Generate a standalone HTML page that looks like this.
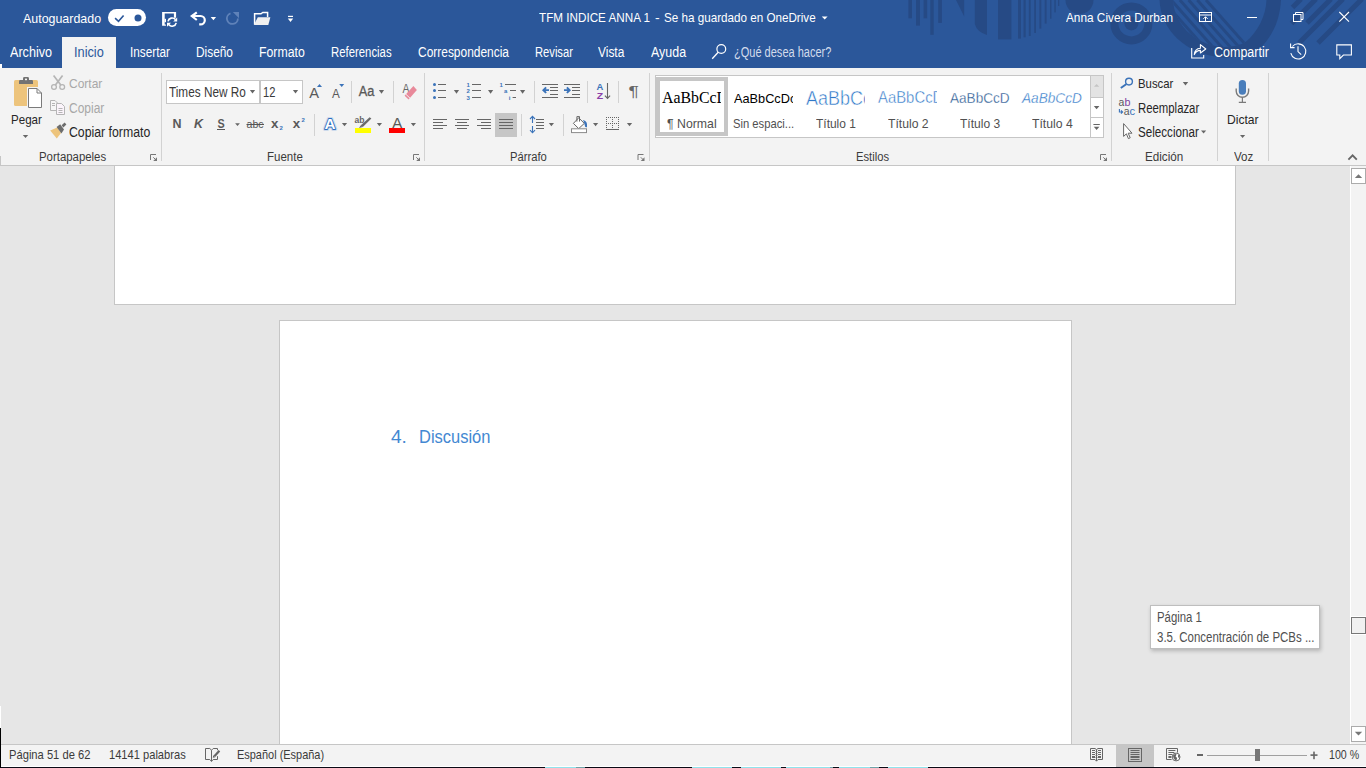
<!DOCTYPE html>
<html lang="es">
<head>
<meta charset="utf-8">
<title>TFM INDICE ANNA 1 - Word</title>
<style>
html,body{margin:0;padding:0;background:#e6e6e6;}
body{width:1366px;height:768px;overflow:hidden;font-family:"Liberation Sans",sans-serif;}
#app{position:relative;width:1366px;height:768px;overflow:hidden;background:#e6e6e6;}
#app div,#app span,#app svg{position:absolute;}
.t{white-space:pre;transform-origin:0 0;}
.clip{overflow:hidden;}
.grp{left:0;top:0;width:0;height:0;}
#titlebar{left:0;top:0;width:1366px;height:68px;background:#2b579a;}
#tabsel{left:62px;top:37px;width:54px;height:31px;background:#f3f3f3;}
#ribbon{left:0;top:68px;width:1366px;height:97px;background:#f3f3f3;}
#ribbonline{left:0;top:165px;width:1366px;height:1px;background:#c6c6c6;}
#page1{left:114px;top:166px;width:1120px;height:138px;background:#fff;border:1px solid #c6c6c6;border-top:none;}
#page2{left:279px;top:320px;width:791px;height:430px;background:#fff;border:1px solid #c6c6c6;}
#vscroll{left:1350px;top:166px;width:16px;height:578px;background:#f3f3f3;border-left:1px solid #fff;box-sizing:border-box;}
#statusline{left:0;top:744px;width:1366px;height:1px;background:#c6c6c6;}
#status{left:0;top:745px;width:1366px;height:21px;background:#f3f3f3;border-bottom:1px solid #fff;}
#bottomline{left:0;top:767px;width:1366px;height:1px;background:#0a0a14;}
.combo{background:#fff;border:1px solid #c6c6c6;box-sizing:border-box;}
.sbbtn{width:15px;height:16px;background:#fff;border:1px solid #ababab;box-sizing:border-box;}
.gsep{width:1px;top:73px;height:88px;background:#d2d2d2;}
.sep{width:1px;background:#d2d2d2;}
</style>
</head>
<body>
<div id="app">
<div id="titlebar"></div>
<div id="tabsel"></div>
<div id="ribbon"></div>
<div id="ribbonline"></div>
<div id="page1"></div>
<div id="page2"></div>
<div id="vscroll"></div>
<div id="statusline"></div>
<div id="status"></div>
<div id="bottomline"></div>
<div id="taskbarpeek" style="left:0;top:0"><div style="left:545px;top:767px;width:31px;height:1px;background:#8fe3ec"></div><div style="left:576px;top:767px;width:9px;height:1px;background:#6fa3a8"></div><div style="left:692px;top:767px;width:40px;height:1px;background:#8fe3ec"></div><div style="left:741px;top:767px;width:40px;height:1px;background:#8fe3ec"></div><div style="left:786px;top:767px;width:44px;height:1px;background:#8fe3ec"></div><div style="left:830px;top:767px;width:3px;height:1px;background:#6fa3a8"></div><div style="left:839px;top:767px;width:31px;height:1px;background:#8fe3ec"></div><div style="left:870px;top:767px;width:9px;height:1px;background:#6fa3a8"></div><div style="left:888px;top:767px;width:40px;height:1px;background:#8fe3ec"></div></div>
<div id="leftedge" style="left:0;top:728px;width:1px;height:40px;background:#000"></div>
<div style="left:0;top:706px;width:1px;height:22px;background:#fff"></div>
<div style="left:0;top:64px;width:2px;height:4px;background:#fff"></div>
<div style="left:0;top:156px;width:1px;height:9px;background:#c6c6c6"></div>
<svg id="titleart" style="left:0;top:0" width="1366" height="68" viewBox="0 0 1366 68">
<defs>
<clipPath id="shieldin"><path d="M1173 0 C1174 22 1192 44 1222 47 Q1238 47 1245.5 42 C1258 32 1266 15 1266.5 0 Z"/></clipPath>
</defs>
<g fill="#264a85">
<rect x="908.4" y="0" width="3.6" height="18.3"/>
<rect x="916" y="0" width="4" height="25.6"/>
<rect x="923.6" y="0" width="3.6" height="18.3"/>
<rect x="930.3" y="0" width="3.4" height="34.8"/>
<rect x="938.2" y="0" width="3.7" height="22.9"/>
<path d="M956 0 L964.2 0 L964.2 16.4 Z"/>
<path d="M974.8 0 H987 V35 Q977 32 974.8 24 Z"/>
<rect x="998" y="0" width="13.4" height="39.4"/>
<rect x="1018" y="0" width="3" height="38.6"/>
<rect x="1023.5" y="0" width="2.2" height="37.3"/>
<rect x="1028.8" y="0" width="1.9" height="36"/>
<rect x="1034.2" y="0" width="1.8" height="33"/>
<rect x="1039.4" y="0" width="1.9" height="28.6"/>
<rect x="1044.7" y="0" width="1.9" height="23.6"/>
<rect x="1050" y="0" width="1.5" height="18.7"/>
<rect x="1054.3" y="0" width="1.5" height="12.4"/>
<rect x="1058" y="0" width="1.3" height="6"/>
<circle cx="1079.5" cy="0" r="14"/>
<circle cx="1131.4" cy="23.4" r="7"/>
<path d="M1159.5 0 C1161 30 1185 54 1222 57.5 Q1245 58 1258 50 C1272 38 1280 20 1281 0 Z"/>
</g>
<circle cx="1131.4" cy="23.4" r="17" fill="none" stroke="#264a85" stroke-width="8"/>
<path d="M1173 0 C1174 22 1192 44 1222 47 Q1238 47 1245.5 42 C1258 32 1266 15 1266.5 0 Z" fill="#2b579a"/>
<g clip-path="url(#shieldin)" stroke="#264a85" stroke-width="2.9" fill="none">
<path d="M1206 0 L1250.3 50"/><path d="M1197.3 0 L1241.6 50"/><path d="M1188.6 0 L1232.9 50"/><path d="M1179.9 0 L1224.2 50"/><path d="M1171.2 0 L1215.5 50"/><path d="M1162.5 0 L1206.8 50"/>
</g>
<g stroke="#264a85" stroke-width="5" fill="none">
<path d="M1299 43 L1343 -1"/><path d="M1318 43 L1362 -1"/><path d="M1307 23 L1331 -1"/><path d="M1291.5 23.5 L1316 -1"/><path d="M1292.5 7.5 L1301 -1"/>
</g>
</svg>
<svg id="titleicons" style="left:0;top:0" width="1366" height="68" viewBox="0 0 1366 68">
<!-- autosave toggle -->
<rect x="108" y="9" width="38" height="17" rx="8.5" fill="#fff"/>
<path d="M115.1 18.1 L118.5 21.3 L123.6 15.4" fill="none" stroke="#2b579a" stroke-width="1.6"/>
<circle cx="138" cy="17.9" r="3.5" fill="#2b579a"/>
<!-- save -->
<path d="M162.1 11.9 H176.1 V17.8 H173.9 V13.5 H164.7 V24.4 H165.9 V25.8 H162.1 Z" fill="#fff"/>
<rect x="164.5" y="18.8" width="1.5" height="3.4" fill="#fff"/>
<path d="M168 21.4 A4.2 4.2 0 0 1 175.4 19.6" fill="none" stroke="#fff" stroke-width="1.6"/>
<path d="M176.2 22.8 A4.2 4.2 0 0 1 168.8 24.6" fill="none" stroke="#fff" stroke-width="1.6"/>
<path d="M177.2 17.4 V21.4 H173.2 Z" fill="#fff"/>
<path d="M167 26.8 V22.8 H171 Z" fill="#fff"/>
<!-- undo -->
<path d="M193 16 H200.6 A4.2 4.2 0 0 1 200.6 24.4 H199.2" fill="none" stroke="#fff" stroke-width="2.2"/>
<path d="M196.8 12.3 L191.8 16 L196.8 20" fill="none" stroke="#fff" stroke-width="2.2" stroke-linejoin="miter"/>
<path d="M210.7 17 H216.1 L213.4 20.2 Z" fill="#fff"/>
<!-- redo (disabled) -->
<path d="M237.9 18.5 A5.5 5.5 0 1 1 230.5 13.3" fill="none" stroke="#5f82b9" stroke-width="1.8"/>
<path d="M232.8 12 H239 V18.2 Z" fill="#5f82b9"/>
<!-- open folder -->
<path d="M254.6 24.5 V13.8 H261 L262.8 12.4 H267.6 V17" fill="none" stroke="#fff" stroke-width="1.5"/>
<path d="M257.8 17.2 H270.4 L268.3 25 H253.9 Z" fill="#f0f0f0"/>
<!-- customize QAT -->
<rect x="288" y="15.8" width="5" height="1.2" fill="#fff"/>
<path d="M287.8 18.6 H293.2 L290.5 22 Z" fill="#fff"/>
<!-- title dropdown arrow -->
<path d="M821.8 16.6 H827.6 L824.7 19.6 Z" fill="#fff"/>
<!-- ribbon display options -->
<rect x="1199.5" y="12.5" width="12" height="9" fill="none" stroke="#fff" stroke-width="1"/>
<path d="M1199.5 15 H1211.5" stroke="#fff" stroke-width="1" fill="none"/>
<path d="M1205.5 21 V17 M1203.3 18.9 L1205.5 16.7 L1207.7 18.9" stroke="#fff" stroke-width="1" fill="none"/>
<!-- minimize -->
<rect x="1247" y="17" width="10" height="1" fill="#fff"/>
<!-- restore -->
<rect x="1293.5" y="14.5" width="7.5" height="7" fill="none" stroke="#fff" stroke-width="1"/>
<path d="M1295.5 14.5 V12.5 H1303 V19.5 H1301" fill="none" stroke="#fff" stroke-width="1"/>
<!-- close -->
<path d="M1339.3 12 L1349 21.7 M1349 12 L1339.3 21.7" stroke="#fff" stroke-width="1.1" fill="none"/>
<!-- search (tell me) -->
<circle cx="721.3" cy="49" r="4.4" fill="none" stroke="#fff" stroke-width="1.2"/>
<path d="M718.2 52.2 L712.2 58.8" stroke="#fff" stroke-width="1.3" fill="none"/>
<!-- share -->
<path d="M1191.7 48 V58 H1203.7 V55" fill="none" stroke="#fff" stroke-width="1.1"/>
<path d="M1194.3 54.6 C1194.6 50.5 1197 48.4 1200.4 48.2 V44.6 L1205.8 49 L1200.4 53 V50.4 C1197.6 50.4 1195.6 51.6 1194.3 54.6 Z" fill="none" stroke="#fff" stroke-width="1.1" stroke-linejoin="round"/>
<!-- history -->
<path d="M1292.4 46.5 A7.6 7.6 0 1 1 1290.8 53.2" fill="none" stroke="#fff" stroke-width="1.1"/>
<path d="M1290.6 43.6 V47.6 H1294.6" fill="none" stroke="#fff" stroke-width="1.1"/>
<path d="M1298 46.2 V51.6 L1301.2 54.6" fill="none" stroke="#fff" stroke-width="1.1"/>
<!-- comments -->
<path d="M1336.8 44.9 H1351.4 V55 H1343.4 L1339.8 58.6 V55 H1336.8 Z" fill="none" stroke="#fff" stroke-width="1.1"/>
</svg>

<div class="gsep" style="left:161px"></div>
<div class="gsep" style="left:424px"></div>
<div class="gsep" style="left:649px"></div>
<div class="gsep" style="left:1111px"></div>
<div class="gsep" style="left:1217px"></div>
<div class="gsep" style="left:1268px"></div>
<div class="sep" style="left:351px;top:81px;height:22px"></div>
<div class="sep" style="left:393px;top:81px;height:22px"></div>
<div class="sep" style="left:314px;top:114px;height:22px"></div>
<div class="sep" style="left:534px;top:81px;height:22px"></div>
<div class="sep" style="left:587px;top:81px;height:22px"></div>
<div class="sep" style="left:618px;top:81px;height:22px"></div>
<div class="sep" style="left:521px;top:114px;height:22px"></div>
<div class="sep" style="left:563px;top:114px;height:22px"></div>
<div id="fontname" class="combo" style="left:166px;top:80px;width:94px;height:24px"></div>
<div id="fontsize" class="combo" style="left:260px;top:80px;width:43px;height:24px"></div>
<div id="justifysel" style="left:495px;top:113px;width:22px;height:24px;background:#c6c6c6"></div>
<div id="gallery" style="left:655px;top:75px;width:449px;height:63px;background:#fff;border:1px solid #c6c6c6;box-sizing:border-box"></div>
<div id="stylesel" style="left:656px;top:77px;width:72px;height:59px;border:4px solid #c6c6c6;box-sizing:border-box;background:#fff"></div>
<div id="galscroll" style="left:1090px;top:76px;width:12px;height:61px;border-left:1px solid #c6c6c6;background:#fff"></div>
<div style="left:1091px;top:76px;width:12px;height:21px;background:#e3e3e3"></div>
<div style="left:1090px;top:97px;width:13px;height:1px;background:#c6c6c6"></div>
<div style="left:1090px;top:117px;width:13px;height:1px;background:#c6c6c6"></div>
<svg id="ribbonicons" style="left:0;top:0" width="1366" height="170" viewBox="0 0 1366 170" font-family="Liberation Sans, sans-serif">
<!-- paste -->
<rect x="14" y="80" width="24" height="26" rx="1.6" fill="#edc47c"/>
<path d="M19 84 V81.2 Q19 80 20.2 80 H23 V78.4 Q23 77 24.4 77 H27.6 Q29 77 29 78.4 V80 H31.8 Q33 80 33 81.2 V84 Z" fill="#737373"/>
<rect x="25" y="78.6" width="2" height="1.6" fill="#f3f3f3"/>
<rect x="27" y="87" width="16" height="22" fill="#f3f3f3"/>
<path d="M28.5 88.5 H37 L41.5 93 V107.5 H28.5 Z" fill="#fff" stroke="#7a7a7a" stroke-width="1"/>
<path d="M37 88.5 V93 H41.5" fill="none" stroke="#7a7a7a" stroke-width="1"/>
<path d="M22.8 135 H28.2 L25.5 138 Z" fill="#666"/>
<!-- cut (disabled) -->
<g stroke="#b5b5b5" fill="none" stroke-width="1.3">
<circle cx="54" cy="87" r="2.4"/><circle cx="62.2" cy="87" r="2.4"/>
<path d="M55.4 85 L62.6 75.6 M60.8 85 L53.6 75.6" stroke-width="1.7"/>
</g>
<!-- copy (disabled) -->
<g stroke="#b5b5b5" fill="#fbf4fb" stroke-width="1">
<path d="M50.5 100.5 H55 L57.5 103 V110.5 H50.5 Z" fill="#f6f6f6"/>
<path d="M56.5 103.5 H61.5 L64.5 106.5 V114.5 H56.5 Z"/>
<path d="M52 103.5 H55 M52 105.5 H55 M58.5 108.5 H62.5 M58.5 110.5 H62.5 M58.5 112.5 H62.5" fill="none"/>
</g>
<!-- format painter -->
<path d="M50.2 130.4 L57.2 127.6 L61 133 L56.8 138.6 Z" fill="#edc47c"/>
<path d="M56.6 127 L60.2 124.2 L64 129.6 L61.4 133.6 Z" fill="#6d6d6d"/>
<path d="M61.6 125.2 L64.6 122.6 L66.4 124.6 L63.4 127.6 Z" fill="#6d6d6d"/>
<!-- dialog launchers -->
<g id="dl">
<path d="M150.5 160 V154.5 H156" fill="none" stroke="#777" stroke-width="1"/><path d="M153.3 157.3 L155.6 159.6" fill="none" stroke="#777" stroke-width="1"/><path d="M157 157.2 V161 H153.2 Z" fill="#777"/>
</g>
<use href="#dl" x="263"/><use href="#dl" x="487.5"/><use href="#dl" x="950"/>
<!-- combo arrows -->
<path d="M249.9 90 H255.1 L252.5 93.6 Z" fill="#666"/>
<path d="M292.9 90 H298.1 L295.5 93.6 Z" fill="#666"/>
<!-- grow / shrink font -->
<text x="309.2" y="97.8" font-size="15" fill="#595959" textLength="9.8" lengthAdjust="spacingAndGlyphs">A</text>
<path d="M317 87 L319.5 84 L322 87 Z" fill="#3b73b9"/>
<text x="332" y="97.8" font-size="12" fill="#595959" textLength="7.8" lengthAdjust="spacingAndGlyphs">A</text>
<path d="M339.2 84 H344.2 L341.7 87 Z" fill="#3b73b9"/>
<!-- change case -->
<text x="358.8" y="95.8" font-size="14" fill="#595959" textLength="15.6" lengthAdjust="spacingAndGlyphs" stroke="#595959" stroke-width="0.3">Aa</text>
<path d="M378.9 90 H384.1 L381.5 93.8 Z" fill="#666"/>
<!-- clear formatting -->
<text x="402.4" y="93.2" font-size="13" fill="#666" textLength="7" lengthAdjust="spacingAndGlyphs">A</text>
<path d="M413.4 86.1 L416.9 90 L408.6 99.5 L404.6 95.8 Z" fill="#e8899a"/>
<path d="M405.8 94.2 L410 98.2" stroke="#f3f3f3" stroke-width="1" fill="none"/>
<!-- B I U -->
<text x="172.4" y="127.9" font-size="12.5" font-weight="bold" fill="#595959" textLength="9" lengthAdjust="spacingAndGlyphs">N</text>
<text x="194" y="127.9" font-size="12.5" font-weight="bold" font-style="italic" fill="#595959" textLength="9" lengthAdjust="spacingAndGlyphs">K</text>
<text x="217.4" y="127.6" font-size="12" font-weight="bold" fill="#595959" textLength="7.2" lengthAdjust="spacingAndGlyphs">S</text>
<rect x="217" y="129" width="8" height="1" fill="#595959"/>
<path d="M235.1 123.3 H239.9 L237.5 126.1 Z" fill="#666"/>
<text x="246.6" y="127.9" font-size="11.5" fill="#555" textLength="17" lengthAdjust="spacingAndGlyphs">abc</text>
<rect x="246.5" y="124" width="17.5" height="1" fill="#555"/>
<text x="271" y="127.9" font-size="13" font-weight="bold" fill="#595959" textLength="7.4" lengthAdjust="spacingAndGlyphs">x</text>
<text x="279.6" y="130.2" font-size="6" font-weight="bold" fill="#3b73b9">2</text>
<text x="292.8" y="127.9" font-size="13" font-weight="bold" fill="#595959" textLength="7.4" lengthAdjust="spacingAndGlyphs">x</text>
<text x="301.4" y="122" font-size="6" font-weight="bold" fill="#3b73b9">2</text>
<!-- text effects -->
<text x="324.4" y="129.2" font-size="15.5" font-weight="bold" fill="#fff" stroke="#a9c3e6" stroke-width="4" stroke-linejoin="round" opacity="0.5" textLength="11" lengthAdjust="spacingAndGlyphs">A</text>
<text x="324.4" y="129.2" font-size="15.5" font-weight="bold" fill="#fff" stroke="#2e6dbd" stroke-width="1.8" stroke-linejoin="round" paint-order="stroke" textLength="11" lengthAdjust="spacingAndGlyphs">A</text>
<path d="M341.9 123 H347.1 L344.5 126.2 Z" fill="#666"/>
<!-- highlight -->
<text x="354.6" y="122.8" font-size="9" font-weight="bold" fill="#666" textLength="10" lengthAdjust="spacingAndGlyphs">ab</text>
<path d="M369.6 117.2 L371.4 118.6 L362.8 127 L360.6 125.6 Z" fill="#6a6a6a"/>
<path d="M360.6 125.6 L362.8 127 L359 128 Z" fill="#6a6a6a"/>
<rect x="355" y="128" width="16" height="5" fill="#ffff00"/>
<path d="M376.8 123 H382 L379.4 126.2 Z" fill="#666"/>
<!-- font color -->
<text x="392.2" y="128" font-size="14.2" fill="#595959" textLength="10" lengthAdjust="spacingAndGlyphs">A</text>
<rect x="389" y="128" width="16" height="5" fill="#ff0000"/>
<path d="M410.8 123 H416 L413.4 126.2 Z" fill="#666"/>
<!-- bullets -->
<g fill="#3b73b9"><circle cx="434.5" cy="84.5" r="1.5"/><circle cx="434.5" cy="90.5" r="1.5"/><circle cx="434.5" cy="97.5" r="1.5"/></g>
<g fill="#666"><rect x="438" y="84" width="8" height="1"/><rect x="438" y="90" width="8" height="1"/><rect x="438" y="97" width="8" height="1"/></g>
<path d="M453.9 90 H459.1 L456.5 93.8 Z" fill="#666"/>
<!-- numbering -->
<g fill="#3b73b9" font-size="6" font-weight="bold"><text x="466.6" y="87">1</text><text x="466.6" y="93">2</text><text x="466.6" y="99.8">3</text></g>
<g fill="#666"><rect x="472" y="84" width="9" height="1"/><rect x="472" y="90" width="9" height="1"/><rect x="472" y="97" width="9" height="1"/></g>
<path d="M488 90 H493.2 L490.6 93.8 Z" fill="#666"/>
<!-- multilevel -->
<g fill="#3b73b9" font-size="6" font-weight="bold"><text x="499.6" y="87">1</text><text x="504" y="93">a</text><text x="508.8" y="99.8">i</text></g>
<g fill="#666"><rect x="505" y="84" width="11" height="1"/><rect x="510" y="90" width="6" height="1"/><rect x="512.6" y="97" width="3.4" height="1"/></g>
<path d="M520 90 H525.2 L522.6 93.8 Z" fill="#666"/>
<!-- decrease indent -->
<g fill="#666"><rect x="542" y="84" width="16" height="1"/><rect x="550" y="87" width="8" height="1"/><rect x="550" y="90" width="8" height="1"/><rect x="550" y="94" width="8" height="1"/><rect x="542" y="97" width="16" height="1"/></g>
<path d="M542 90.2 L545.4 86.8 L546.8 88 L545.6 89.3 H549 V91.1 H545.6 L546.8 92.4 L545.4 93.6 Z" fill="#3b73b9"/>
<!-- increase indent -->
<g fill="#666"><rect x="564" y="84" width="16" height="1"/><rect x="572" y="87" width="8" height="1"/><rect x="572" y="90" width="8" height="1"/><rect x="572" y="94" width="8" height="1"/><rect x="564" y="97" width="16" height="1"/></g>
<path d="M571 90.2 L567.6 86.8 L566.2 88 L567.4 89.3 H564 V91.1 H567.4 L566.2 92.4 L567.6 93.6 Z" fill="#3b73b9"/>
<!-- sort -->
<text x="596.6" y="89.6" font-size="9" font-weight="bold" fill="#3b73b9" textLength="6.8" lengthAdjust="spacingAndGlyphs">A</text>
<text x="596.8" y="98.8" font-size="9.6" font-weight="bold" fill="#8b3fa8" textLength="6.4" lengthAdjust="spacingAndGlyphs">Z</text>
<path d="M607.5 83 V98 M604.9 95.6 L607.5 98.4 L610.1 95.6" fill="none" stroke="#666" stroke-width="1.1"/>
<!-- pilcrow -->
<text x="628.6" y="96" font-size="15.5" fill="#666" textLength="10.4" lengthAdjust="spacingAndGlyphs">¶</text>
<!-- alignment -->
<g fill="#666">
<rect x="433" y="119" width="14" height="1"/><rect x="433" y="122" width="10" height="1"/><rect x="433" y="125" width="14" height="1"/><rect x="433" y="128" width="10" height="1"/>
<rect x="455" y="119" width="14" height="1"/><rect x="457" y="122" width="10" height="1"/><rect x="455" y="125" width="14" height="1"/><rect x="457" y="128" width="10" height="1"/>
<rect x="477" y="119" width="14" height="1"/><rect x="481" y="122" width="10" height="1"/><rect x="477" y="125" width="14" height="1"/><rect x="481" y="128" width="10" height="1"/>
<rect x="499" y="119" width="14" height="1"/><rect x="499" y="122" width="14" height="1"/><rect x="499" y="125" width="14" height="1"/><rect x="499" y="128" width="14" height="1"/>
</g>
<!-- line spacing -->
<g fill="none" stroke="#3b73b9" stroke-width="1.1"><path d="M532.5 116.6 V123 M530 119 L532.5 116.4 L535 119"/><path d="M532.5 126 V132.6 M530 130.2 L532.5 132.8 L535 130.2"/></g>
<g fill="#666"><rect x="536" y="119" width="8" height="1"/><rect x="536" y="122" width="8" height="1"/><rect x="536" y="125" width="8" height="1"/><rect x="536" y="128" width="8" height="1"/></g>
<path d="M548.8 123 H554 L551.4 126.2 Z" fill="#666"/>
<!-- shading -->
<path d="M573.4 123.4 L578.7 117.8 L584.3 123.4 L578.7 128.6 Z" fill="#fff" stroke="#666" stroke-width="1"/>
<path d="M576.9 121.6 V116.6 H579.5 V121.6" fill="none" stroke="#666" stroke-width="1"/>
<path d="M582.8 120 Q588 121 587 127.2 Q584.8 127.6 584.6 124.4 Q584.6 122.4 582.8 120 Z" fill="#3b73b9"/>
<rect x="571.5" y="128.8" width="15" height="3.8" fill="#fff" stroke="#8a8a8a" stroke-width="1"/>
<path d="M593 123 H598.2 L595.6 126.2 Z" fill="#666"/>
<!-- borders -->
<g stroke="#666" stroke-width="1" stroke-dasharray="1 1" fill="none">
<path d="M606 117.5 H619"/><path d="M606 123.5 H619"/><path d="M606.5 117 V129"/><path d="M612.5 117 V129"/><path d="M618.5 117 V129"/>
</g>
<rect x="606" y="129" width="13" height="1" fill="#666"/>
<path d="M626.9 123 H632.1 L629.5 126.2 Z" fill="#666"/>
<!-- gallery scroll -->
<path d="M1094 86.8 L1096.6 84 L1099.2 86.8 Z" fill="#c4c4c4"/>
<path d="M1093.8 106 H1099.4 L1096.6 109.2 Z" fill="#666"/>
<rect x="1093.4" y="124" width="6.4" height="1" fill="#666"/><path d="M1093.8 126.8 H1099.4 L1096.6 130 Z" fill="#666"/>
<!-- find -->
<circle cx="1129" cy="81.6" r="3.4" fill="none" stroke="#3b73b9" stroke-width="1.4"/>
<path d="M1126.2 84.2 L1120.8 88" stroke="#3b73b9" stroke-width="2" fill="none"/>
<path d="M1182.8 82 H1188.2 L1185.5 85.4 Z" fill="#666"/>
<!-- replace -->
<text x="1118.6" y="106.4" font-size="11" fill="#595959" textLength="5.8" lengthAdjust="spacingAndGlyphs">a</text>
<text x="1124.4" y="106.4" font-size="11" fill="#7c3f9e" textLength="6" lengthAdjust="spacingAndGlyphs">b</text>
<text x="1123.8" y="114.8" font-size="11" fill="#595959" textLength="5.8" lengthAdjust="spacingAndGlyphs">a</text>
<text x="1129.6" y="114.8" font-size="11" fill="#3b73b9" textLength="5.6" lengthAdjust="spacingAndGlyphs">c</text>
<path d="M1119.4 109 V112 H1122.4 M1121 110.4 L1122.6 112 L1121 113.6" fill="none" stroke="#3b73b9" stroke-width="1.1"/>
<!-- select -->
<path d="M1123.6 123.6 V136.4 L1126.4 133.8 L1128.4 138.6 L1130.2 137.8 L1128.2 133.2 H1132 Z" fill="#fff" stroke="#666" stroke-width="1" stroke-linejoin="round"/>
<path d="M1201 130.4 H1206.2 L1203.6 133.6 Z" fill="#666"/>
<!-- dictate -->
<rect x="1238.8" y="80" width="7.2" height="14.8" rx="3.6" fill="#4a7ebb"/>
<path d="M1236.2 88.6 V91 A6.2 6.2 0 0 0 1248.6 91 V88.6" fill="none" stroke="#7a7a7a" stroke-width="1.4"/>
<path d="M1242.4 97.4 V102 M1238.8 102.3 H1246" fill="none" stroke="#7a7a7a" stroke-width="1.2"/>
<path d="M1240 135 H1245.2 L1242.6 138 Z" fill="#666"/>
<!-- collapse ribbon -->
<path d="M1348.4 159.6 L1352.6 155.4 L1356.8 159.6" fill="none" stroke="#666" stroke-width="1.9"/>
</svg>

<div id="sb-up" class="sbbtn" style="left:1351px;top:168px"></div>
<div id="sb-thumb" style="left:1351px;top:617px;width:15px;height:17px;background:#f0f0f0;border:1px solid #777;box-sizing:border-box;outline:1px solid #fff"></div>
<div id="sb-down" class="sbbtn" style="left:1351px;top:726px"></div>
<svg id="sbicons" style="left:1351px;top:166px" width="15" height="578" viewBox="1351 166 15 578">
<path d="M1354.8 178 L1358.5 174.2 L1362.2 178 Z" fill="#777"/>
<path d="M1354.8 731.8 H1362.2 L1358.5 735.6 Z" fill="#777"/>
</svg>
<div id="tooltip" style="left:1150px;top:605px;width:170px;height:44px;background:#fff;border:1px solid #bebebe;box-sizing:border-box;box-shadow:1px 2px 4px rgba(0,0,0,0.22)"></div>

<div id="viewsel" style="left:1116px;top:744px;width:38px;height:23px;background:#c6c6c6"></div>
<svg id="statusicons" style="left:0;top:744px" width="1366" height="24" viewBox="0 744 1366 24">
<!-- proofing -->
<path d="M211.5 750.2 L209.8 748.5 H205.5 V759.5 H209.8 L211.5 761.4 L213.2 759.5 H217.5 V756.2 M217.5 750.2 V748.5 H213.2 L211.5 750.2 V761.4" fill="none" stroke="#666" stroke-width="1"/>
<path d="M219.4 750.7 L214.4 756.2" stroke="#666" stroke-width="2.2" fill="none"/>
<path d="M213.2 755.2 L215.4 757.2 L212.8 757.8 Z" fill="#666"/>
<!-- read mode -->
<path d="M1096.5 749.6 L1095 748.5 H1090.5 V759.5 H1095 L1096.5 761.2 L1098 759.5 H1102.5 V748.5 H1098 Z M1096.5 749.6 V761" fill="none" stroke="#666" stroke-width="1"/>
<g fill="#666"><rect x="1092" y="750" width="3" height="1"/><rect x="1092" y="752" width="3" height="1"/><rect x="1092" y="754" width="3" height="1"/><rect x="1092" y="756" width="3" height="2"/>
<rect x="1098" y="750" width="3" height="1"/><rect x="1098" y="752" width="3" height="1"/><rect x="1098" y="754" width="3" height="1"/><rect x="1098" y="756" width="3" height="2"/>
<rect x="1095.6" y="751" width="1.8" height="1"/><rect x="1095.6" y="753" width="1.8" height="1"/><rect x="1095.6" y="755" width="1.8" height="1"/><rect x="1095.6" y="757" width="1.8" height="1"/></g>
<!-- print layout -->
<rect x="1128.5" y="748.5" width="13" height="13" fill="none" stroke="#666" stroke-width="1"/>
<g fill="#666"><rect x="1130.5" y="750" width="9" height="1"/><rect x="1130.5" y="752" width="9" height="1"/><rect x="1130.5" y="754" width="9" height="1"/><rect x="1130.5" y="756" width="9" height="2"/><rect x="1130.5" y="759" width="9" height="1"/></g>
<!-- web layout -->
<path d="M1177.5 752.6 V748.5 H1166.5 V759.5 H1171.6" fill="none" stroke="#666" stroke-width="1"/>
<g fill="#666"><rect x="1168.4" y="750" width="7" height="1"/><rect x="1168.4" y="752" width="6" height="1"/><rect x="1168.4" y="754" width="4" height="1"/><rect x="1168.4" y="756" width="3" height="2"/></g>
<circle cx="1176.1" cy="757" r="3.9" fill="#fff" stroke="#666" stroke-width="1"/>
<path d="M1173 755.4 Q1175 753.8 1176.6 754.2 L1175.6 756.4 L1177.2 758 L1176.4 760.4 Q1173.4 759.6 1173 755.4 Z" fill="#666"/>
<path d="M1178 754.4 L1179.6 756 L1179.4 758.4 L1178 757 Z" fill="#666"/>
<!-- zoom slider -->
<rect x="1197" y="754" width="6" height="2" fill="#666"/>
<rect x="1207" y="755" width="100" height="1" fill="#a0a0a0"/>
<rect x="1255" y="749" width="5" height="12" fill="#777"/>
<rect x="1310.5" y="754.3" width="7" height="1.6" fill="#666"/><rect x="1313.2" y="751.6" width="1.6" height="7.6" fill="#666"/>
</svg>

<div id="titlebar-text" class="grp">
<span class="t" style='left:23.3px;top:11px;font-size:13.1px;line-height:15px;height:15px;color:#fff;transform:scaleX(0.9486);'>Autoguardado</span>
<span class="t" style='left:538.5px;top:10px;font-size:13.1px;line-height:15px;height:15px;color:#fff;transform:scaleX(0.8926);'>TFM INDICE ANNA 1</span>
<span class="t" style='left:654.5px;top:10px;font-size:13.1px;line-height:15px;height:15px;color:#fff;transform:scaleX(1.066);'>-</span>
<span class="t" style='left:664.4px;top:10px;font-size:13.1px;line-height:15px;height:15px;color:#fff;transform:scaleX(0.8903);'>Se ha guardado en OneDrive</span>
<span class="t" style='left:1066.3px;top:10px;font-size:13.1px;line-height:15px;height:15px;color:#fff;transform:scaleX(0.9017);'>Anna Civera Durban</span>
</div>
<div id="ribbon-tabs" class="grp">
<span class="t" style='left:9.5px;top:45px;font-size:13.8px;line-height:15px;height:15px;color:#fff;transform:scaleX(0.9143);'>Archivo</span>
<span class="t" style='left:73.7px;top:45px;font-size:13.8px;line-height:15px;height:15px;color:#2b579a;transform:scaleX(0.9246);'>Inicio</span>
<span class="t" style='left:129.8px;top:45px;font-size:13.8px;line-height:15px;height:15px;color:#fff;transform:scaleX(0.8523);'>Insertar</span>
<span class="t" style='left:195.7px;top:45px;font-size:13.8px;line-height:15px;height:15px;color:#fff;transform:scaleX(0.8611);'>Diseño</span>
<span class="t" style='left:258.7px;top:45px;font-size:13.8px;line-height:15px;height:15px;color:#fff;transform:scaleX(0.8902);'>Formato</span>
<span class="t" style='left:330.8px;top:45px;font-size:13.8px;line-height:15px;height:15px;color:#fff;transform:scaleX(0.8234);'>Referencias</span>
<span class="t" style='left:417.5px;top:45px;font-size:13.8px;line-height:15px;height:15px;color:#fff;transform:scaleX(0.866);'>Correspondencia</span>
<span class="t" style='left:534.9px;top:45px;font-size:13.8px;line-height:15px;height:15px;color:#fff;transform:scaleX(0.8102);'>Revisar</span>
<span class="t" style='left:598.4px;top:45px;font-size:13.8px;line-height:15px;height:15px;color:#fff;transform:scaleX(0.8638);'>Vista</span>
<span class="t" style='left:650.7px;top:45px;font-size:13.8px;line-height:15px;height:15px;color:#fff;transform:scaleX(0.9017);'>Ayuda</span>
<span class="t" style='left:734.0px;top:45px;font-size:13.8px;line-height:15px;height:15px;color:#d3dcec;transform:scaleX(0.7985);'>¿Qué desea hacer?</span>
<span class="t" style='left:1213.8px;top:45px;font-size:13.8px;line-height:15px;height:15px;color:#fff;transform:scaleX(0.9056);'>Compartir</span>
</div>
<div id="ribbon-labels" class="grp">
<span class="t" style='left:10.8px;top:112px;font-size:13px;line-height:15px;height:15px;color:#262626;transform:scaleX(0.8889);'>Pegar</span>
<span class="t" style='left:69.2px;top:76px;font-size:13px;line-height:15px;height:15px;color:#a8a8a8;transform:scaleX(0.9217);'>Cortar</span>
<span class="t" style='left:69.2px;top:100px;font-size:14px;line-height:16px;height:16px;color:#a8a8a8;transform:scaleX(0.8557);'>Copiar</span>
<span class="t" style='left:69.2px;top:124px;font-size:14px;line-height:16px;height:16px;color:#262626;transform:scaleX(0.8773);'>Copiar formato</span>
<span class="t" style='left:39.0px;top:150px;font-size:12px;line-height:14px;height:14px;color:#3b3b3b;transform:scaleX(0.9492);'>Portapapeles</span>
<span class="t" style='left:267.1px;top:150px;font-size:12px;line-height:14px;height:14px;color:#3b3b3b;transform:scaleX(0.9594);'>Fuente</span>
<span class="t" style='left:510.1px;top:150px;font-size:12px;line-height:14px;height:14px;color:#3b3b3b;transform:scaleX(0.9352);'>Párrafo</span>
<span class="t" style='left:856.0px;top:150px;font-size:12px;line-height:14px;height:14px;color:#3b3b3b;transform:scaleX(0.9339);'>Estilos</span>
<span class="t" style='left:1144.9px;top:150px;font-size:12px;line-height:14px;height:14px;color:#3b3b3b;transform:scaleX(0.9721);'>Edición</span>
<span class="t" style='left:1233.5px;top:150px;font-size:12px;line-height:14px;height:14px;color:#3b3b3b;transform:scaleX(0.9616);'>Voz</span>
<span class="t" style='left:168.5px;top:84px;font-size:14px;line-height:16px;height:16px;color:#3a3a3a;transform:scaleX(0.8411);'>Times New Ro</span>
<span class="t" style='left:263.2px;top:84px;font-size:14px;line-height:16px;height:16px;color:#3a3a3a;transform:scaleX(0.796);'>12</span>
<span class="t" style='left:1138.2px;top:76px;font-size:13px;line-height:15px;height:15px;color:#262626;transform:scaleX(0.8729);'>Buscar</span>
<span class="t" style='left:1138.0px;top:100px;font-size:14px;line-height:16px;height:16px;color:#262626;transform:scaleX(0.8111);'>Reemplazar</span>
<span class="t" style='left:1137.6px;top:124px;font-size:14px;line-height:16px;height:16px;color:#262626;transform:scaleX(0.8305);'>Seleccionar</span>
<span class="t" style='left:1227.0px;top:112px;font-size:13px;line-height:15px;height:15px;color:#262626;transform:scaleX(0.9311);'>Dictar</span>
</div>
<div id="styles-gallery-labels" class="grp">
<span class="t" style='left:666.7px;top:116px;font-size:13px;line-height:15px;height:15px;color:#505050;transform:scaleX(0.9454);'>¶ Normal</span>
<span class="t" style='left:732.6px;top:116px;font-size:13px;line-height:15px;height:15px;color:#505050;transform:scaleX(0.8642);'>Sin espaci...</span>
<span class="t" style='left:815.6px;top:116px;font-size:13px;line-height:15px;height:15px;color:#505050;transform:scaleX(0.9201);'>Título 1</span>
<span class="t" style='left:888.1px;top:116px;font-size:13px;line-height:15px;height:15px;color:#505050;transform:scaleX(0.9368);'>Título 2</span>
<span class="t" style='left:960.2px;top:116px;font-size:13px;line-height:15px;height:15px;color:#505050;transform:scaleX(0.9249);'>Título 3</span>
<span class="t" style='left:1031.9px;top:116px;font-size:13px;line-height:15px;height:15px;color:#505050;transform:scaleX(0.9392);'>Título 4</span>
</div>
<div id="statusbar-text" class="grp">
<span class="t" style='left:8.8px;top:747px;font-size:13px;line-height:15px;height:15px;color:#3b3b3b;transform:scaleX(0.8596);'>Página 51 de 62</span>
<span class="t" style='left:109.4px;top:747px;font-size:13px;line-height:15px;height:15px;color:#3b3b3b;transform:scaleX(0.8556);'>14141 palabras</span>
<span class="t" style='left:237.1px;top:747px;font-size:13px;line-height:15px;height:15px;color:#3b3b3b;transform:scaleX(0.8426);'>Español (España)</span>
<span class="t" style='left:1329.2px;top:747px;font-size:13px;line-height:15px;height:15px;color:#3b3b3b;transform:scaleX(0.8202);'>100 %</span>
</div>
<div id="scroll-tooltip-text" class="grp">
<span class="t" style='left:1156.7px;top:609px;font-size:14px;line-height:16px;height:16px;color:#505050;transform:scaleX(0.8127);'>Página 1</span>
<span class="t" style='left:1156.7px;top:629px;font-size:14px;line-height:16px;height:16px;color:#505050;transform:scaleX(0.8191);'>3.5. Concentración de PCBs ...</span>
</div>
<div id="document-text" class="grp">
<span class="t" style='left:391.1px;top:427px;font-size:18.2px;line-height:20px;height:20px;color:#4388d2;transform:scaleX(1.0499);'>4.</span>
<span class="t" style='left:418.5px;top:427px;font-size:18.2px;line-height:20px;height:20px;color:#4388d2;transform:scaleX(0.9059);'>Discusión</span>
</div>
<div id="styles-gallery-samples" class="grp">
<div class="clip" style="left:660px;top:81px;width:61.39999999999998px;height:29px;"><span class="t" style='left:2.1px;top:7px;font-size:16.8px;line-height:19px;height:19px;color:#000;transform:scaleX(0.9446);font-family:"Liberation Serif", serif;'>AaBbCcD</span></div>
<div class="clip" style="left:730px;top:85px;width:63px;height:25px;"><span class="t" style='left:4.0px;top:7px;font-size:12.4px;line-height:14px;height:14px;color:#000;transform:scaleX(1.0277);'>AaBbCcDc</span></div>
<div class="clip" style="left:802px;top:82px;width:62.799999999999955px;height:30px;"><span class="t" style='left:4.1px;top:5px;font-size:19.5px;line-height:22px;height:22px;color:#2f78c8;transform:scaleX(0.9225);-webkit-text-stroke:0.5px #fff;'>AaBbCc</span></div>
<div class="clip" style="left:874px;top:82px;width:63px;height:30px;"><span class="t" style='left:3.9px;top:6px;font-size:16.5px;line-height:18px;height:18px;color:#2f78c8;transform:scaleX(0.9018);-webkit-text-stroke:0.4px #fff;'>AaBbCcD</span></div>
<span class="t" style='left:950.2px;top:90px;font-size:14.7px;line-height:16px;height:16px;color:#24558f;transform:scaleX(0.9254);-webkit-text-stroke:0.3px #fff;'>AaBbCcD</span>
<span class="t" style='left:1022.3px;top:90px;font-size:14px;line-height:16px;height:16px;color:#2f78c8;transform:scaleX(0.9727);font-style:italic;-webkit-text-stroke:0.3px #fff;'>AaBbCcD</span>
</div>
</div>
</body>
</html>
